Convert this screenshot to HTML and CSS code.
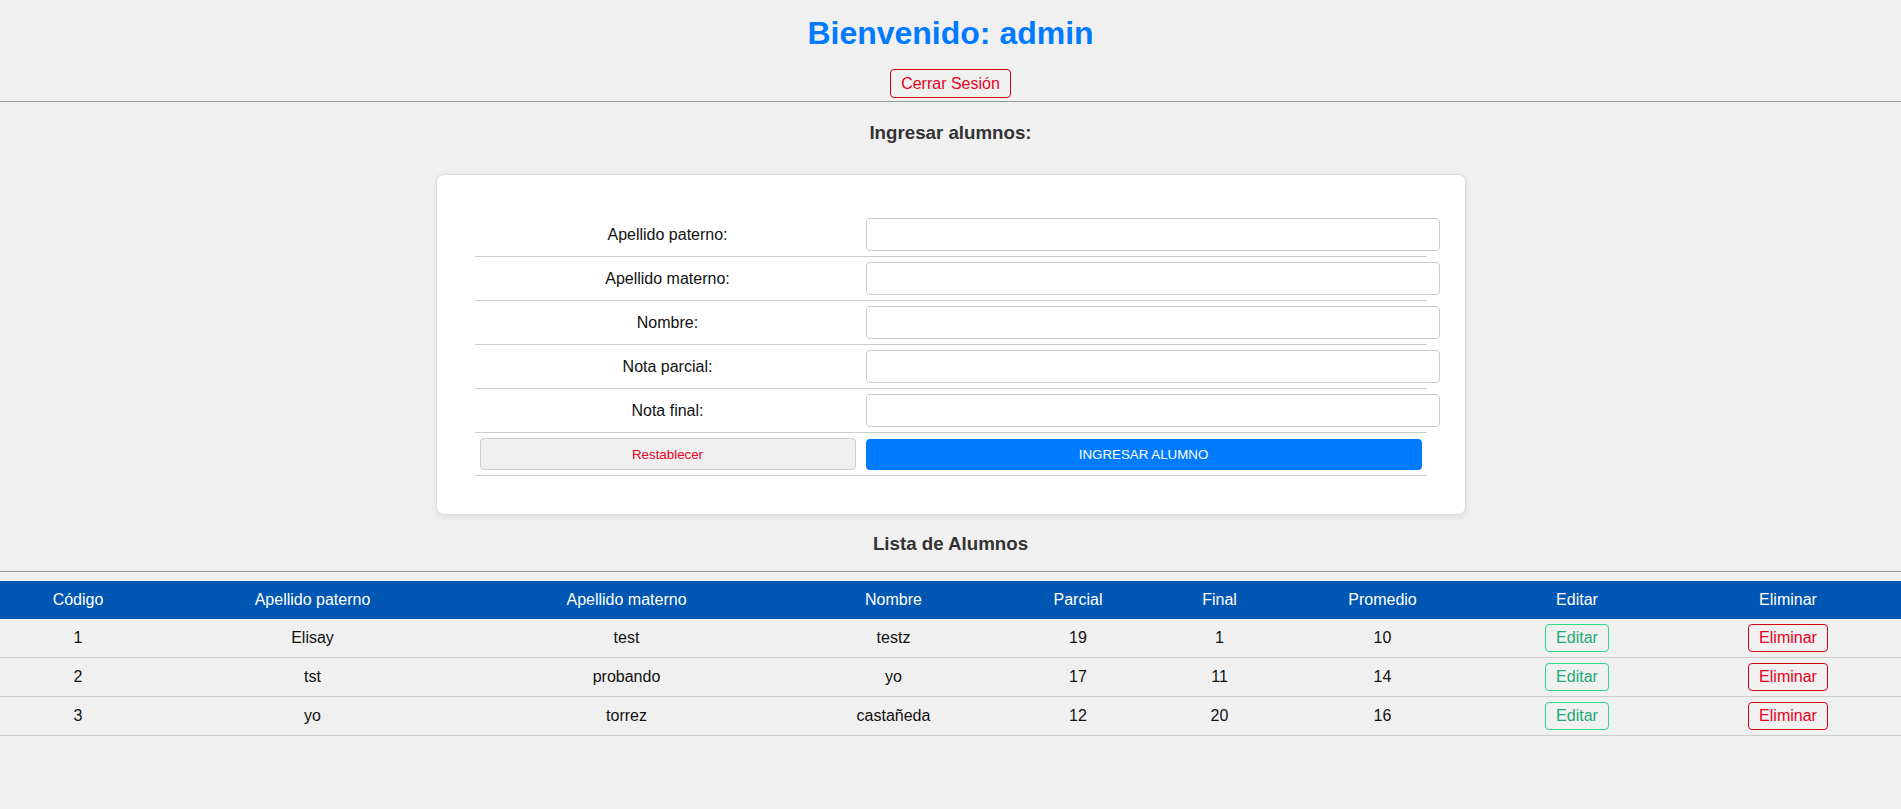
FILE: index.html
```html
<!DOCTYPE html>
<html lang="es">
<head>
<meta charset="utf-8">
<title>Alumnos</title>
<link rel="stylesheet" href="styles.css">
</head>
<body>
<header class="top">
  <h1 class="welcome">Bienvenido: admin</h1>
  <button class="btn btn-danger-outline logout">Cerrar Sesión</button>
</header>
<hr class="divider divider-top">
<h3 class="section-title title-form">Ingresar alumnos:</h3>
<div class="card">
  <form>
  <table class="form-table">
    <colgroup><col class="col-label"><col></colgroup>
    <tr><td class="label-cell">Apellido paterno:</td><td><input class="field" type="text"></td></tr>
    <tr><td class="label-cell">Apellido materno:</td><td><input class="field" type="text"></td></tr>
    <tr><td class="label-cell">Nombre:</td><td><input class="field" type="text"></td></tr>
    <tr><td class="label-cell">Nota parcial:</td><td><input class="field" type="text"></td></tr>
    <tr><td class="label-cell">Nota final:</td><td><input class="field" type="text"></td></tr>
    <tr>
      <td><button type="reset" class="btn-reset">Restablecer</button></td>
      <td><button type="button" class="btn-submit">INGRESAR ALUMNO</button></td>
    </tr>
  </table>
  </form>
</div>
<h3 class="section-title title-list">Lista de Alumnos</h3>
<hr class="divider divider-list">
<table class="data-table">
  <colgroup>
    <col class="c1"><col class="c2"><col class="c3"><col class="c4"><col class="c5"><col class="c6"><col class="c7"><col class="c8"><col class="c9">
  </colgroup>
  <thead>
    <tr><th>Código</th><th>Apellido paterno</th><th>Apellido materno</th><th>Nombre</th><th>Parcial</th><th>Final</th><th>Promedio</th><th>Editar</th><th>Eliminar</th></tr>
  </thead>
  <tbody>
    <tr><td>1</td><td>Elisay</td><td>test</td><td>testz</td><td>19</td><td>1</td><td>10</td><td><button class="btn btn-edit">Editar</button></td><td><button class="btn btn-danger-outline">Eliminar</button></td></tr>
    <tr><td>2</td><td>tst</td><td>probando</td><td>yo</td><td>17</td><td>11</td><td>14</td><td><button class="btn btn-edit">Editar</button></td><td><button class="btn btn-danger-outline">Eliminar</button></td></tr>
    <tr><td>3</td><td>yo</td><td>torrez</td><td>castañeda</td><td>12</td><td>20</td><td>16</td><td><button class="btn btn-edit">Editar</button></td><td><button class="btn btn-danger-outline">Eliminar</button></td></tr>
  </tbody>
</table>
</body>
</html>
```
FILE: styles.css
```css
html, body {
  margin: 0;
  padding: 0;
}
body {
  background: #f0f0f0;
  font-family: "Liberation Sans", Arial, sans-serif;
  font-size: 16px;
  color: #111;
}
.top {
  display: flex;
  flex-direction: column;
  align-items: center;
}
.welcome {
  margin: 15px 0 0;
  font-size: 32px;
  font-weight: bold;
  color: #007bff;
}
.btn {
  font-family: "Liberation Sans", Arial, sans-serif;
  font-size: 16px;
  line-height: 18px;
  padding: 4px 10px;
  background: transparent;
  border-radius: 4px;
  cursor: pointer;
}
.btn-danger-outline {
  color: #e8001c;
  border: 1px solid #d40016;
}
.btn-edit {
  color: #1fa97a;
  border: 1px solid #2fd98a;
}
.logout {
  margin-top: 17px;
  line-height: 19px;
}
.divider {
  border: 0;
  border-top: 1px solid #999;
  height: 0;
  margin: 0;
}
.divider-top {
  margin-top: 3px;
}
.section-title {
  font-size: 18.72px;
  font-weight: bold;
  color: #333;
  text-align: center;
  margin: 0;
}
.title-form {
  margin-top: 20px;
}
.title-list {
  margin-top: 18px;
}
.divider-list {
  margin-top: 16px;
}
.card {
  width: 953px;
  margin: 30px auto 0;
  padding: 38px 37px 38px 38px;
  background: #fff;
  border: 1px solid #ddd;
  border-radius: 8px;
  box-shadow: 0 2px 6px rgba(0, 0, 0, 0.08);
}
.form-table {
  width: 952px;
  border-collapse: collapse;
  table-layout: fixed;
}
.col-label {
  width: 386px;
}
.form-table td {
  padding: 5px;
  border-bottom: 1px solid #ccc;
  vertical-align: middle;
}
.label-cell {
  text-align: center;
  color: #111;
}
.field {
  display: block;
  width: 100%;
  box-sizing: content-box;
  height: 15px;
  padding: 8px;
  border: 1px solid #ccc;
  border-radius: 4px;
  background: #fff;
  font-family: "Liberation Sans", Arial, sans-serif;
  font-size: 13.33px;
}
.btn-reset {
  display: block;
  width: 100%;
  height: 32px;
  background: #efefef;
  border: 1px solid #ccc;
  border-radius: 4px;
  color: #e8001c;
  font-family: "Liberation Sans", Arial, sans-serif;
  font-size: 13.33px;
}
.btn-submit {
  display: block;
  width: 100%;
  height: 31px;
  background: #007bff;
  border: 0;
  border-radius: 4px;
  color: #fff;
  font-family: "Liberation Sans", Arial, sans-serif;
  font-size: 13.33px;
}
.data-table {
  width: 100%;
  margin-top: 9px;
  border-collapse: collapse;
  table-layout: fixed;
}
.c1 { width: 156px; }
.c2 { width: 313px; }
.c3 { width: 315px; }
.c4 { width: 219px; }
.c5 { width: 150px; }
.c6 { width: 133px; }
.c7 { width: 193px; }
.c8 { width: 196px; }
.c9 { width: 226px; }
.data-table th {
  background: #0056b3;
  color: #fff;
  font-weight: normal;
  line-height: 18px;
  padding: 10px 0;
  text-align: center;
}
.data-table td {
  padding: 5px 0;
  line-height: 18px;
  text-align: center;
  border-bottom: 1px solid #ccc;
  color: #111;
}
```
